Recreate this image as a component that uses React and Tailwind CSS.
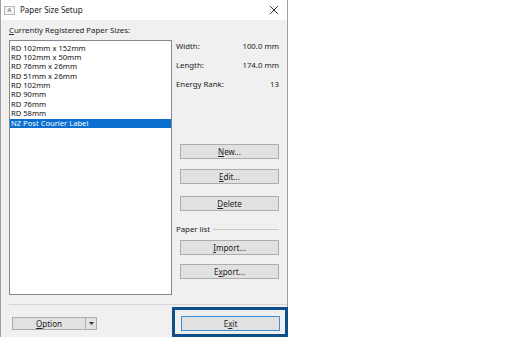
import React from "react";

const F = { fontFamily: '"Noto Sans", "Open Sans", sans-serif' };

function Btn({ children, className = "" }) {
  return (
    <div
      className={`h-[15px] w-[99px] ml-[8px] flex items-center justify-center bg-[#e1e1e1] border border-[#adadad] text-[8px] text-[#222] ${className}`}
    >
      {children}
    </div>
  );
}

const items = [
  "RD 102mm x 152mm",
  "RD 102mm x 50mm",
  "RD 76mm x 26mm",
  "RD 51mm x 26mm",
  "RD 102mm",
  "RD 90mm",
  "RD 76mm",
  "RD 58mm",
];

export default function App() {
  return (
    <div className="w-[508px] h-[337px] bg-white relative overflow-hidden" style={F}>
      <div className="w-[288px] h-[337px] flex flex-col border-l border-r border-[#a0a0a0]">
        {/* title bar */}
        <div className="h-[20px] bg-white flex items-center shrink-0">
          <div className="ml-[3px] w-[11px] h-[9px] border border-[#b8b8b8] bg-[#f4f4f4] flex items-center justify-center text-[6px] text-[#555] leading-none">
            A
          </div>
          <div className="ml-[5px] text-[8px] text-[#222]">Paper Size Setup</div>
          <div className="ml-auto mr-[8px]">
            <svg width="10" height="10" viewBox="0 0 10 10">
              <path d="M1 1 L9 9 M9 1 L1 9" stroke="#333" strokeWidth="1" />
            </svg>
          </div>
        </div>
        {/* body */}
        <div className="flex-1 bg-[#f0f0f0] flex flex-col">
          <div className="flex">
            <div className="ml-[8px] flex flex-col">
              <div className="mt-[5px] h-[10px] leading-[10px] text-[7.8px] text-[#222]">
                <span className="underline">C</span>urrently Registered Paper Sizes:
              </div>
              <div className="mt-[5px] w-[163px] h-[255px] bg-white border border-[#828790] pt-[2.5px]">
                {items.map((t) => (
                  <div key={t} className="h-[9.4px] leading-[9.4px] pl-[1px] text-[7.6px] text-[#111] whitespace-nowrap">
                    {t}
                  </div>
                ))}
                <div className="h-[9.4px] leading-[9.4px] pl-[1px] text-[7.6px] text-white bg-[#0a6fd0] whitespace-nowrap">
                  NZ Post Courier Label
                </div>
              </div>
            </div>
            <div className="flex-1 flex flex-col pt-[21px] text-[7.8px] text-[#222]">
              <div className="flex h-[10px] leading-[10px] ml-[4px] mr-[8px]">
                <span>Width:</span>
                <span className="ml-auto">100.0 mm</span>
              </div>
              <div className="flex h-[10px] leading-[10px] ml-[4px] mr-[8px] mt-[9px]">
                <span>Length:</span>
                <span className="ml-auto">174.0 mm</span>
              </div>
              <div className="flex h-[10px] leading-[10px] ml-[4px] mr-[8px] mt-[9px]">
                <span>Energy Rank:</span>
                <span className="ml-auto">13</span>
              </div>
              <Btn className="mt-[55px]">
                <span><span className="underline">N</span>ew...</span>
              </Btn>
              <Btn className="mt-[10px]">
                <span><span className="underline">E</span>dit...</span>
              </Btn>
              <Btn className="mt-[12px]">
                <span><span className="underline">D</span>elete</span>
              </Btn>
              <div className="mt-[13px] ml-[4px] mr-[8px] flex items-center h-[10px]">
                <span className="leading-[10px]">Paper list</span>
                <div className="flex-1 ml-[3px] h-px bg-[#c8c8c8]" />
              </div>
              <Btn className="mt-[6px]">
                <span><span className="underline">I</span>mport...</span>
              </Btn>
              <Btn className="mt-[9px]">
                <span>E<span className="underline">x</span>port...</span>
              </Btn>
            </div>
          </div>
          <div className="mt-[9px] ml-[8px] h-px bg-[#d4d4d4]" />
          <div className="flex mt-[11px]">
            <div className="ml-[11px] mt-[1px] w-[85px] h-[13px] flex bg-[#e1e1e1] border border-[#adadad] text-[8px] text-[#222]">
              <div className="flex-1 flex items-center justify-center">
                <span><span className="underline">O</span>ption</span>
              </div>
              <div className="w-[11px] border-l border-[#adadad] flex items-center justify-center">
                <svg width="5" height="3" viewBox="0 0 5 3">
                  <path d="M0 0 L5 0 L2.5 3 Z" fill="#333" />
                </svg>
              </div>
            </div>
            <div className="ml-[84px] w-[99px] h-[15px] flex items-center justify-center bg-[#e1e1e1] border border-[#3c8fd8] text-[8px] text-[#222]">
              <span>E<span className="underline">x</span>it</span>
            </div>
          </div>
        </div>
      </div>
      {/* annotation highlight */}
      <div className="absolute left-[172px] top-[307px] w-[116px] h-[30px] border-[3px] border-[#0d4f8b]" />
    </div>
  );
}
